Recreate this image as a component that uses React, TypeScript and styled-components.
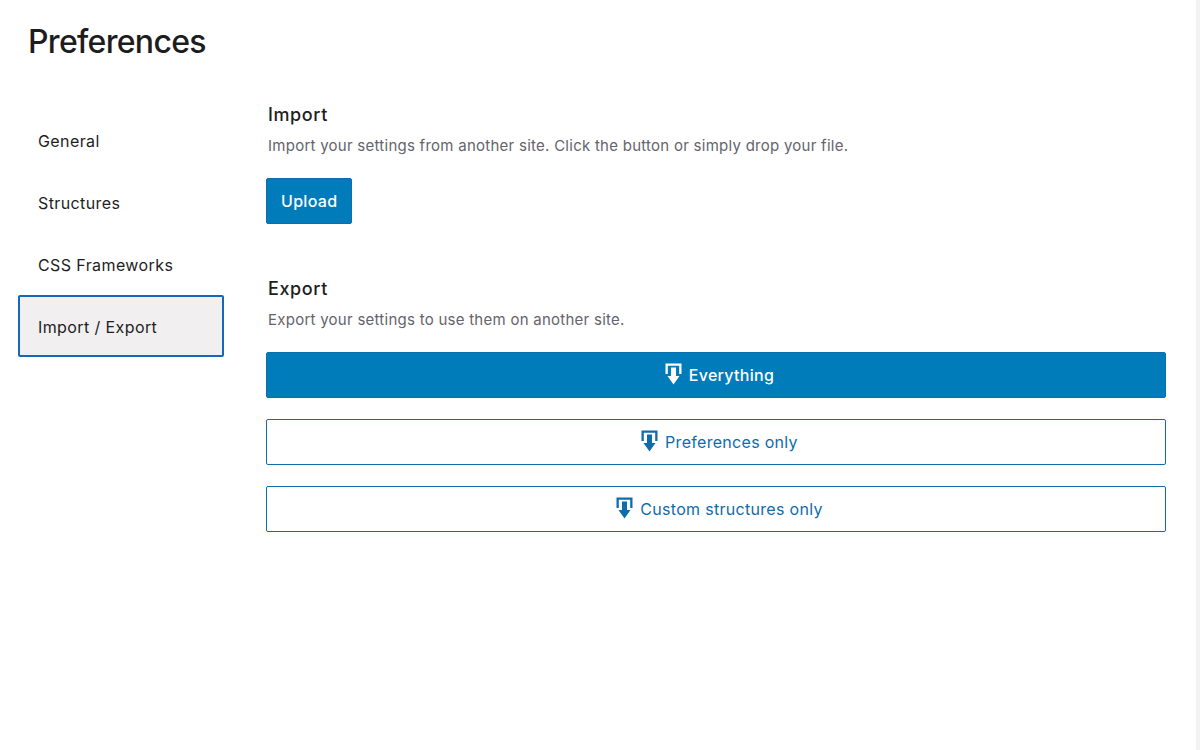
import React from "react";
import styled, { createGlobalStyle } from "styled-components";

const Global = createGlobalStyle`
  html, body { margin: 0; padding: 0; background: #fff; }
  body { font-family: Inter, "Liberation Sans", sans-serif; color: #1e1e1e; }
`;

const Page = styled.div`
  box-sizing: border-box;
  width: 1200px;
  height: 750px;
  overflow: hidden;
  display: flex;
`;

const Main = styled.div`
  flex: 1;
  min-width: 0;
  padding: 22px 30px 0 18px;
`;

const Title = styled.h1`
  margin: 0 0 42px 10px;
  font-size: 32px;
  line-height: 39px;
  font-weight: 500;
  letter-spacing: -0.7px;
  color: #1d1d20;
`;

const Columns = styled.div`
  display: flex;
  gap: 42px;
`;

const Sidebar = styled.nav`
  width: 206px;
  flex: none;
  display: flex;
  flex-direction: column;
  padding-top: 6px;
`;

const Tab = styled.div<{ $active?: boolean }>`
  box-sizing: border-box;
  height: 62px;
  padding: 1px 0 0 18px;
  display: flex;
  align-items: center;
  font-size: 16px;
  letter-spacing: 0.4px;
  color: #1e1e1e;
  border-radius: 2px;
  border: 2px solid ${(p) => (p.$active ? "#1568b8" : "transparent")};
  background: ${(p) => (p.$active ? "#f1eff0" : "transparent")};
`;

const Content = styled.div`
  flex: 1;
  min-width: 0;
`;

const Section = styled.section`
  margin-bottom: 53px;
`;

const Heading = styled.h2`
  margin: 0 0 9px 2px;
  font-size: 18px;
  line-height: 24px;
  font-weight: 500;
  letter-spacing: 0.6px;
  color: #1e1e1e;
`;

const Description = styled.p`
  margin: 0 0 22px 2px;
  font-size: 15px;
  line-height: 20px;
  letter-spacing: 0.26px;
  color: #64646c;
`;

const Stack = styled.div`
  display: flex;
  flex-direction: column;
  gap: 21px;
`;

const Button = styled.button<{ $primary?: boolean; $full?: boolean }>`
  box-sizing: border-box;
  width: ${(p) => (p.$full ? "100%" : "auto")};
  align-self: flex-start;
  height: 46px;
  padding: 0 14px;
  display: flex;
  align-items: center;
  justify-content: center;
  gap: 7px;
  font-family: inherit;
  font-size: 16px;
  letter-spacing: 0.3px;
  font-weight: ${(p) => (p.$primary ? 500 : 400)};
  border-radius: 2px;
  border: 1px solid #0f6dae;
  color: ${(p) => (p.$primary ? "#fff" : "#0f6cab")};
  background: ${(p) => (p.$primary ? "#007cba" : "#fff")};
`;

const IconSvg = styled.svg`
  flex: none;
  margin-left: 7px;
  margin-top: -2px;
`;

const ExportIcon = ({ color }: { color: string }) => (
  <IconSvg width="17" height="22" viewBox="0 0 17 22" fill="none" aria-hidden="true">
    <path d="M0.5 0.5 H16.5 V11 H14.2 V2.8 H2.8 V11 H0.5 Z" fill={color} />
    <path d="M6 4.5 H11 V13 H14.5 L8.5 21.5 L2.5 13 H6 Z" fill={color} />
  </IconSvg>
);

const ScrollEdge = styled.div`
  width: 4px;
  flex: none;
  background: #f2f2f3;
`;

export default function App() {
  return (
    <Page>
      <Global />
      <Main>
        <Title>Preferences</Title>
        <Columns>
          <Sidebar>
            <Tab>General</Tab>
            <Tab>Structures</Tab>
            <Tab>CSS Frameworks</Tab>
            <Tab $active>Import / Export</Tab>
          </Sidebar>
          <Content>
            <Section>
              <Heading>Import</Heading>
              <Description>Import your settings from another site. Click the button or simply drop your file.</Description>
              <Button $primary>Upload</Button>
            </Section>
            <Section>
              <Heading>Export</Heading>
              <Description>Export your settings to use them on another site.</Description>
              <Stack>
                <Button $primary $full><ExportIcon color="#fff" />Everything</Button>
                <Button $full><ExportIcon color="#0f6cab" />Preferences only</Button>
                <Button $full><ExportIcon color="#0f6cab" />Custom structures only</Button>
              </Stack>
            </Section>
          </Content>
        </Columns>
      </Main>
      <ScrollEdge />
    </Page>
  );
}
